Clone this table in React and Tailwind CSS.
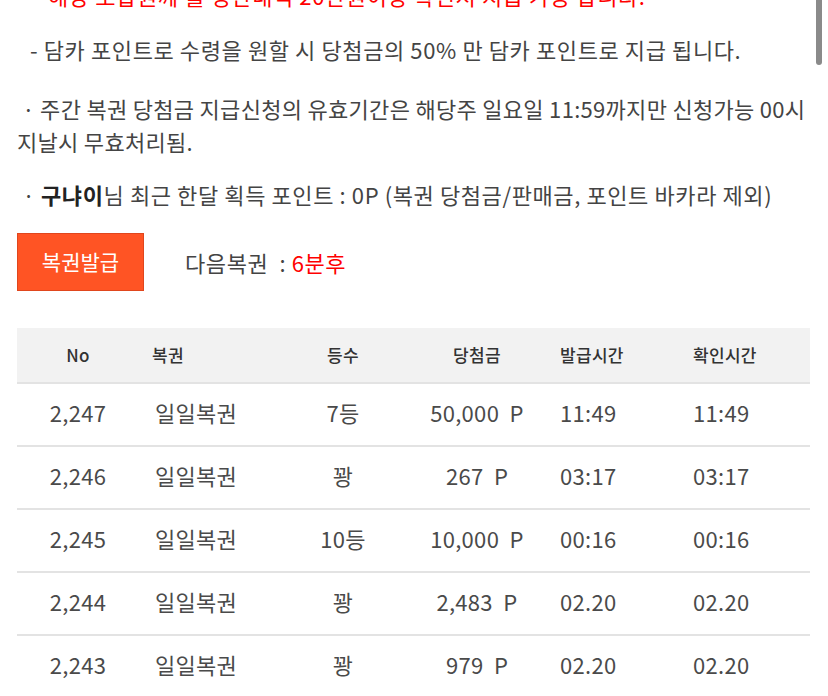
import React from 'react';

const rows = [
  { no: '2,247', name: '일일복권', rank: '7등', prize: '50,000 P', issued: '11:49', checked: '11:49' },
  { no: '2,246', name: '일일복권', rank: '꽝', prize: '267 P', issued: '03:17', checked: '03:17' },
  { no: '2,245', name: '일일복권', rank: '10등', prize: '10,000 P', issued: '00:16', checked: '00:16' },
  { no: '2,244', name: '일일복권', rank: '꽝', prize: '2,483 P', issued: '02.20', checked: '02.20' },
  { no: '2,243', name: '일일복권', rank: '꽝', prize: '979 P', issued: '02.20', checked: '02.20' },
];

const cols = 'grid grid-cols-[122px_143px_122px_146px_130px_130px]';

export default function App() {
  return (
    <div
      className="relative w-[828px] h-[696px] overflow-hidden bg-white text-[#444]"
      style={{ fontFamily: '"Noto Sans CJK KR", "Noto Sans", sans-serif' }}
    >
      <div className="px-[17px] tracking-[0.6px]">
        {/* notices */}
        <p className="mt-[-21px] h-[33px] leading-[33px] text-[22px] text-[#ff0000] pl-[31px] whitespace-nowrap">
          해당 조합원께 월 정산내역 20만원이상 확인서 지급 가능 합니다.
        </p>
        <p className="mt-[21px] leading-[33px] text-[22px] pl-[13px] whitespace-nowrap">
          - 담카 포인트로 수령을 원할 시 당첨금의 50% 만 담카 포인트로 지급 됩니다.
        </p>
        <p className="mt-[26px] leading-[33px] text-[22px] tracking-[0.3px] break-keep">
          &nbsp;· 주간 복권 당첨금 지급신청의 유효기간은 해당주 일요일 11:59까지만 신청가능 00시 지날시 무효처리됨.
        </p>
        <p className="mt-[20px] leading-[33px] text-[22px] whitespace-nowrap">
          &nbsp;· <b className="font-bold text-[#222]">구냐이</b>님 최근 한달 획득 포인트 : 0P (복권 당첨금/판매금, 포인트 바카라 제외)
        </p>

        {/* issue button */}
        <div className="mt-[22px] flex items-center gap-[41px]">
          <button className="w-[127px] h-[58px] bg-[#ff5424] border border-[#e0461d] text-white text-[21px] tracking-normal">
            복권발급
          </button>
          <span className="text-[22px]">
            다음복권 &nbsp;:&nbsp;<span className="text-[#ff0000]">6분후</span>
          </span>
        </div>

        {/* history table */}
        <div className="mt-[37px] w-[793px] tracking-[0.3px]">
          <div className={`${cols} h-[56px] items-center bg-[#f2f2f2] border-b-2 border-[#e3e3e3] text-[17px] font-medium text-[#333]`}>
            <div className="text-center">No</div>
            <div className="pl-[13px]">복권</div>
            <div className="text-center">등수</div>
            <div className="text-center">당첨금</div>
            <div className="pl-[10px]">발급시간</div>
            <div className="pl-[13px]">확인시간</div>
          </div>
          {rows.map((r) => (
            <div key={r.no} className={`${cols} h-[63px] items-center pb-[5px] border-b-2 border-[#e3e3e3] text-[22px] text-[#4a4a4a]`}>
              <div className="text-center">{r.no}</div>
              <div className="pl-[16px]">{r.name}</div>
              <div className="text-center">{r.rank}</div>
              <div className="text-center whitespace-pre">{r.prize.replace(' P', '  P')}</div>
              <div className="pl-[10px]">{r.issued}</div>
              <div className="pl-[13px]">{r.checked}</div>
            </div>
          ))}
        </div>
      </div>

      {/* scrollbar thumb */}
      <div className="absolute right-[6px] top-0 w-[6px] h-[65px] rounded-b-full bg-[#8a8a8a]" />
    </div>
  );
}
